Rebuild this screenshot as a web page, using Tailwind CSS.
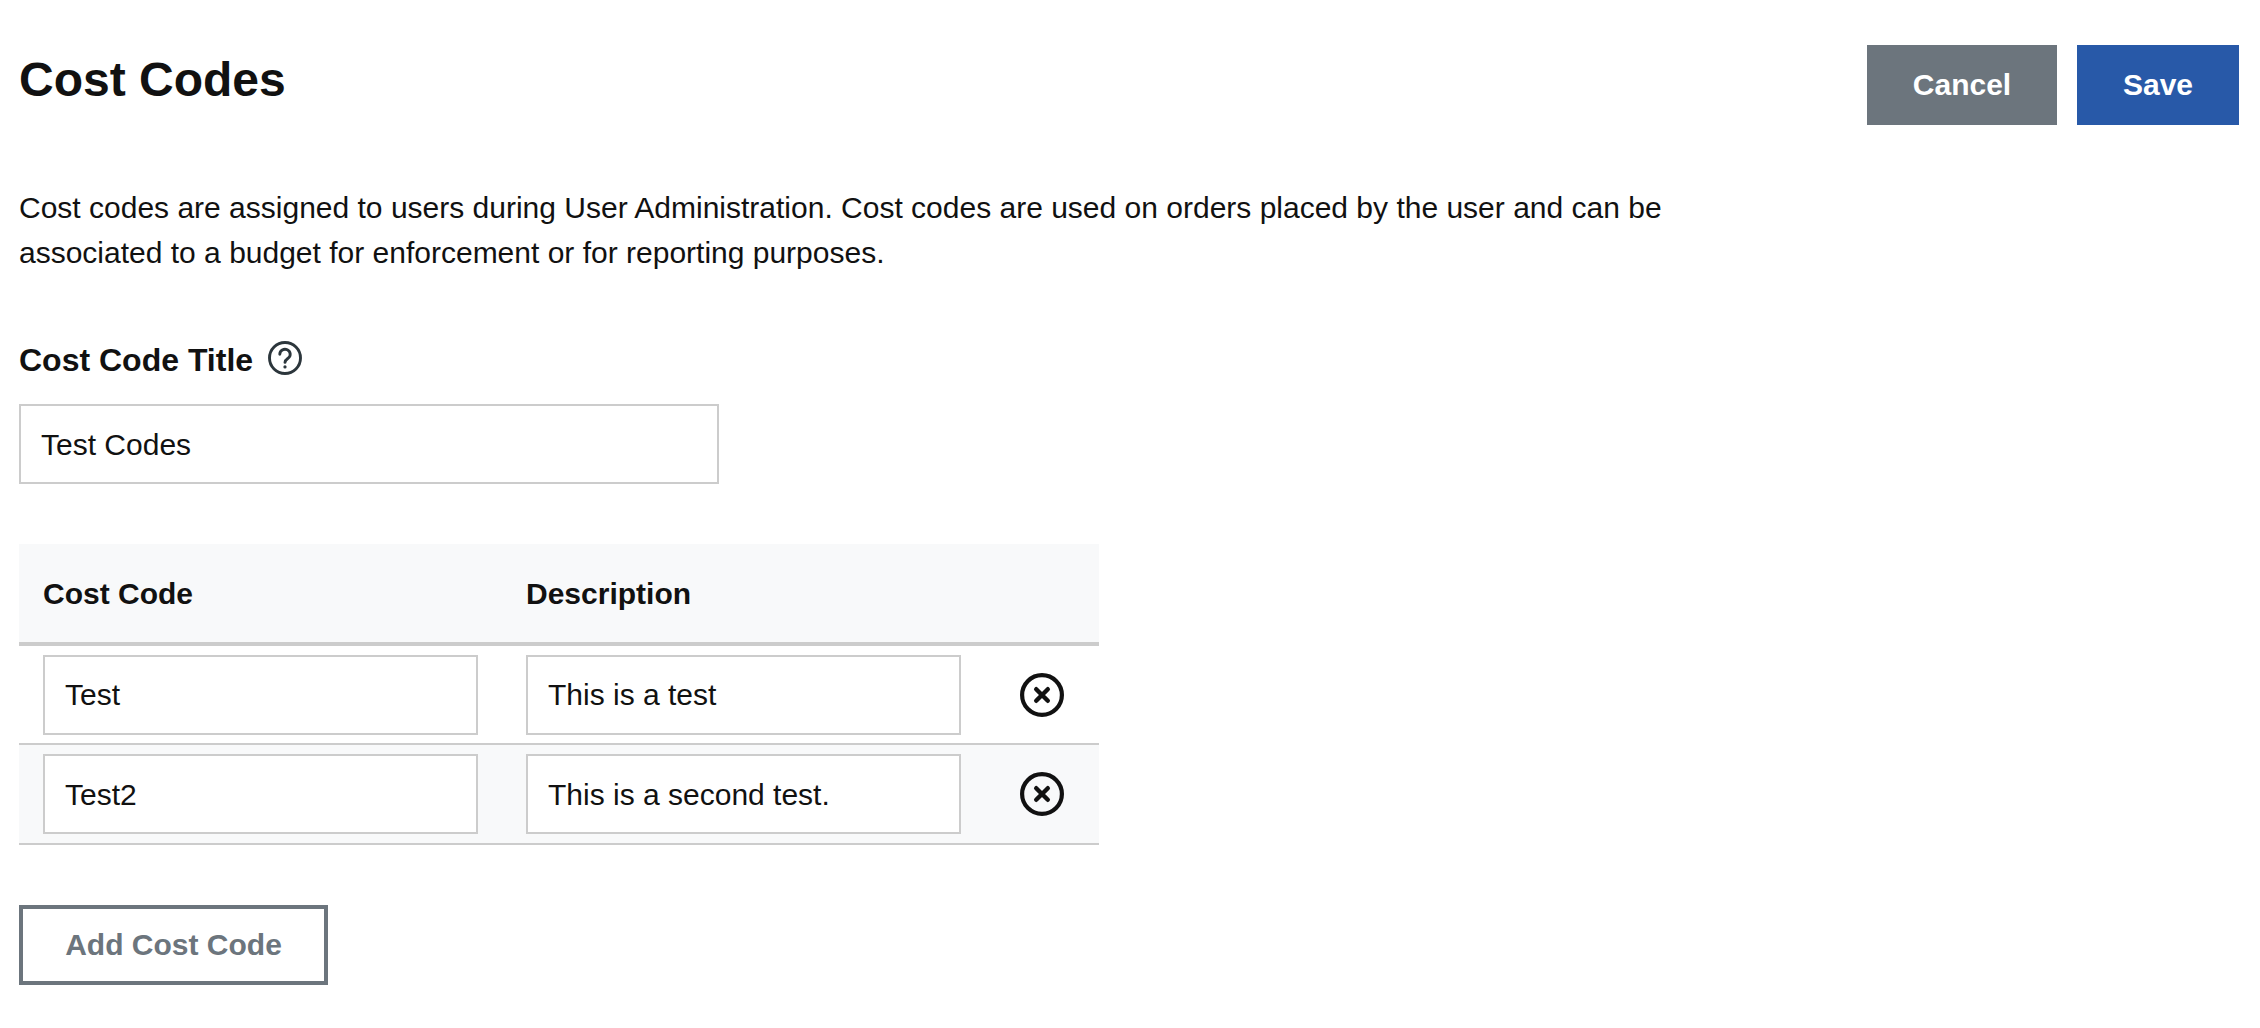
<!DOCTYPE html>
<html lang="en">
<head>
  <meta charset="UTF-8" />
  <title>Cost Codes</title>
  <script src="https://cdn.jsdelivr.net/npm/@tailwindcss/browser@4"></script>
</head>
<body class="bg-white min-h-screen font-['Liberation_Sans',sans-serif] text-[30px] text-[#111]">
  <div class="pt-[45px] pl-[19px] pr-[21px]">
    <div class="flex items-start justify-between h-[80px]">
      <h1 class="text-[48px] leading-[70px] font-bold">Cost Codes</h1>
      <div class="flex gap-[20px]">
        <button class="w-[190px] h-[80px] pb-[2px] bg-[#6c757d] text-white font-bold">Cancel</button>
        <button class="w-[162px] h-[80px] pb-[2px] bg-[#2859a8] text-white font-bold">Save</button>
      </div>
    </div>

    <p class="mt-[60px] w-[1680px] leading-[45px]">Cost codes are assigned to users during User Administration. Cost codes are used on orders placed by the user and can be associated to a budget for enforcement or for reporting purposes.</p>

    <div class="mt-[65px] flex items-center h-[40px]">
      <label class="text-[32px] font-bold leading-[40px]">Cost Code Title</label>
      <svg class="ml-[15px] w-[34px] h-[34px] -mt-[5px]" viewBox="0 0 34 34" fill="none" stroke="#2c363c" stroke-width="2.9" stroke-linecap="round">
        <circle cx="17" cy="17" r="15.5" />
        <path d="M11.8 13.2a5.2 5 0 1 1 8.4 4c-1.8 1.3-3.2 2.1-3.2 4.2" />
        <path d="M17 25.8v.1" stroke-width="3.2" />
      </svg>
    </div>
    <input type="text" value="Test Codes" class="mt-[24px] block w-[700px] h-[80px] px-[20px] pt-[2px] border-2 border-[#ccc] bg-white" />

    <div class="mt-[60px] w-[1080px]">
      <div class="flex h-[102px] items-center gap-[48px] pl-[24px] bg-[#f8f9fa] border-b-4 border-[#ccc] font-bold">
        <div class="w-[435px]">Cost Code</div>
        <div class="w-[435px]">Description</div>
      </div>
      <div class="flex items-center h-[99px] pl-[24px] border-b-2 border-[#ccc]">
        <input type="text" value="Test" class="w-[435px] h-[80px] px-[20px] border-2 border-[#ccc] bg-white" />
        <input type="text" value="This is a test" class="ml-[48px] w-[435px] h-[80px] px-[20px] border-2 border-[#ccc] bg-white" />
        <svg class="ml-[59px] w-[44px] h-[44px]" viewBox="0 0 44 44" fill="none" stroke="#111" stroke-width="4.2" stroke-linecap="round">
          <circle cx="22" cy="22" r="19.9" />
          <path d="M16.2 16.2l11.6 11.6M27.8 16.2L16.2 27.8" stroke-width="4.4" />
        </svg>
      </div>
      <div class="flex items-center h-[100px] pl-[24px] bg-[#f8f9fa] border-b-2 border-[#ccc]">
        <input type="text" value="Test2" class="w-[435px] h-[80px] px-[20px] pt-[2px] border-2 border-[#ccc] bg-white" />
        <input type="text" value="This is a second test." class="ml-[48px] w-[435px] h-[80px] px-[20px] pt-[2px] border-2 border-[#ccc] bg-white" />
        <svg class="ml-[59px] w-[44px] h-[44px]" viewBox="0 0 44 44" fill="none" stroke="#111" stroke-width="4.2" stroke-linecap="round">
          <circle cx="22" cy="22" r="19.9" />
          <path d="M16.2 16.2l11.6 11.6M27.8 16.2L16.2 27.8" stroke-width="4.4" />
        </svg>
      </div>
    </div>

    <button class="mt-[60px] block w-[309px] h-[80px] pb-[1px] border-4 border-[#6c757d] text-[#6c757d] font-bold bg-white">Add Cost Code</button>
  </div>
</body>
</html>
